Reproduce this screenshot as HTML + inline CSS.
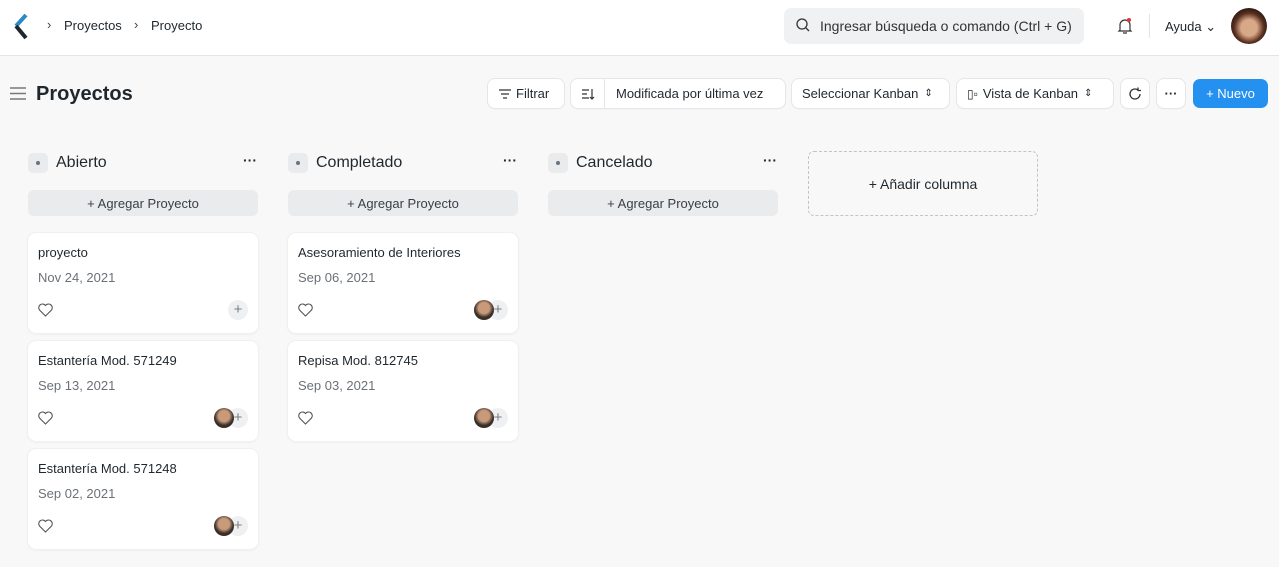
<!DOCTYPE html><html><head><meta charset="utf-8"><style>
*{box-sizing:border-box;margin:0;padding:0}
body{width:1279px;height:567px;overflow:hidden;background:#f8f8f8;font-family:"Liberation Sans",sans-serif;color:#1f272e;position:relative}
.hdr{position:absolute;left:0;top:0;width:1279px;height:56px;background:#fff;border-bottom:1px solid #e2e4e6}
.abs{position:absolute}
.btn{position:absolute;top:79px;height:29px;background:#fff;border-radius:7px;box-shadow:0 0 0 1px #e4e6e8,0 1px 2px rgba(0,0,0,.06);font-size:13px;display:flex;align-items:center;padding:0 10px;color:#1f272e}
.colh{position:absolute;top:154px;font-size:16px;font-weight:500}
.dot{position:absolute;top:153px;width:20px;height:20px;border-radius:5px;background:#e9ebed}
.dot:after{content:"";position:absolute;left:8px;top:8px;width:4px;height:4px;border-radius:2px;background:#6b7280}
.dots{position:absolute;top:152px;font-size:14px;font-weight:bold;letter-spacing:0}
.add{position:absolute;top:190px;width:230px;height:26px;background:#e9ebed;border-radius:6px;font-size:13px;text-align:center;line-height:27px;color:#383f46}
.card{position:absolute;width:230px;height:100px;background:#fff;border-radius:8px;box-shadow:0 0 0 1px #eef0f1,0 1px 3px rgba(0,0,0,.06)}
.card .t{position:absolute;left:10px;top:12px;font-size:13px;font-weight:500}
.card .d{position:absolute;left:10px;top:37px;font-size:13px;color:#6b7177}
.card .h{position:absolute;left:10px;top:70px}
.plus{position:absolute;right:10px;top:67px;width:20px;height:20px;border-radius:10px;background:#eef0f1;color:#7c8187;font-size:15px;text-align:center;line-height:20px}
.av{position:absolute;right:24px;top:67px;width:20px;height:20px;border-radius:10px;background:radial-gradient(circle at 50% 40%,#c89a7a 0 35%,#3a2e28 60%)}
</style></head><body>
<div class="hdr">
<svg class="abs" style="left:14px;top:14px" width="14" height="26" viewBox="0 0 14 26"><path d="M12 1 L2 12" stroke="#2d8ac7" stroke-width="4"/><path d="M2 12 L12 24" stroke="#1f272e" stroke-width="4"/></svg>
<div class="abs" style="left:47px;top:17px;font-size:13px;color:#444">›</div>
<div class="abs" style="left:64px;top:18px;font-size:13px">Proyectos</div>
<div class="abs" style="left:134px;top:17px;font-size:13px;color:#444">›</div>
<div class="abs" style="left:151px;top:18px;font-size:13px">Proyecto</div>
<div class="abs" style="left:784px;top:8px;width:300px;height:36px;background:#f0f1f2;border-radius:7px"></div>
<svg class="abs" style="left:796px;top:18px" width="14" height="14" viewBox="0 0 14 14"><circle cx="6" cy="6" r="5" fill="none" stroke="#333" stroke-width="1.3"/><path d="M10 10l3 3" stroke="#333" stroke-width="1.3"/></svg>
<div class="abs" style="left:820px;top:18px;font-size:14px;color:#333">Ingresar búsqueda o comando (Ctrl + G)</div>
<svg class="abs" style="left:1116px;top:16px" width="18" height="20" viewBox="0 0 18 20"><path d="M4 14V9a5 5 0 0 1 10 0v5l1 1H3z M7 17h4" fill="none" stroke="#333" stroke-width="1.2"/><circle cx="13" cy="4" r="2" fill="#e03636"/></svg>
<div class="abs" style="left:1149px;top:14px;width:1px;height:24px;background:#e2e4e6"></div>
<div class="abs" style="left:1165px;top:19px;font-size:13px">Ayuda ⌄</div>
<div class="abs" style="left:1231px;top:8px;width:36px;height:36px;border-radius:18px;background:radial-gradient(circle at 50% 55%,#d9a888 0 30%,#5a3020 55%,#2a1810 75%)"></div>
</div>
<svg class="abs" style="left:10px;top:87px" width="16" height="13"><path d="M0 1h16M0 6.5h16M0 12h16" stroke="#777" stroke-width="1.5"/></svg>
<div class="abs" style="left:36px;top:83px;font-size:20px;font-weight:bold">Proyectos</div>
<div class="btn" style="left:488px;width:76px"><svg width="14" height="12" style="margin-right:4px"><path d="M1 2h12M3 6h8M5 10h4" stroke="#333" stroke-width="1.3"/></svg>Filtrar</div>
<div class="btn" style="left:571px;width:214px;padding:0"><div style="width:34px;height:29px;border-right:1px solid #e4e6e8;display:flex;align-items:center;justify-content:center"><svg width="14" height="12"><path d="M1 2h7M1 6h5M1 10h7M11 1v10M9 9l2 2 2-2" stroke="#333" stroke-width="1.2" fill="none"/></svg></div><span style="padding-left:11px">Modificada por última vez</span></div>
<div class="btn" style="left:792px;width:157px">Seleccionar Kanban <span style="margin-left:6px;font-size:10px">⇕</span></div>
<div class="btn" style="left:957px;width:156px"><span style="font-size:12px;margin-right:5px">▯▫</span>Vista de Kanban <span style="margin-left:6px;font-size:10px">⇕</span></div>
<div class="btn" style="left:1121px;width:28px;padding:0;justify-content:center"><svg width="14" height="14"><path d="M12 7a5 5 0 1 1-2-4M10 0.5v3h3" fill="none" stroke="#333" stroke-width="1.3"/></svg></div>
<div class="btn" style="left:1157px;width:28px;padding:0;justify-content:center;font-weight:bold">···</div>
<div class="btn" style="left:1193px;width:75px;background:#2490ef;color:#fff;box-shadow:none;justify-content:center">+ Nuevo</div>

<div class="dot" style="left:28px"></div><div class="colh" style="left:56px">Abierto</div><div class="dots" style="left:243px">···</div>
<div class="dot" style="left:288px"></div><div class="colh" style="left:316px">Completado</div><div class="dots" style="left:503px">···</div>
<div class="dot" style="left:548px"></div><div class="colh" style="left:576px">Cancelado</div><div class="dots" style="left:763px">···</div>
<div class="add" style="left:28px">+ Agregar Proyecto</div>
<div class="add" style="left:288px">+ Agregar Proyecto</div>
<div class="add" style="left:548px">+ Agregar Proyecto</div>
<div class="abs" style="left:808px;top:151px;width:230px;height:65px;border:1px dashed #c0c4c8;border-radius:6px;font-size:14px;text-align:center;line-height:65px">+ Añadir columna</div>

<div class="card" style="left:28px;top:233px"><div class="t">proyecto</div><div class="d">Nov 24, 2021</div><svg class="h" width="15" height="14"><path d="M7.5 13 1.5 7A3.3 3.3 0 0 1 7.5 2.5 3.3 3.3 0 0 1 13.5 7z" fill="none" stroke="#555" stroke-width="1.1"/></svg><div class="plus">+</div></div>
<div class="card" style="left:28px;top:341px"><div class="t">Estantería Mod. 571249</div><div class="d">Sep 13, 2021</div><svg class="h" width="15" height="14"><path d="M7.5 13 1.5 7A3.3 3.3 0 0 1 7.5 2.5 3.3 3.3 0 0 1 13.5 7z" fill="none" stroke="#555" stroke-width="1.1"/></svg><div class="plus">+</div><div class="av"></div></div>
<div class="card" style="left:28px;top:449px"><div class="t">Estantería Mod. 571248</div><div class="d">Sep 02, 2021</div><svg class="h" width="15" height="14"><path d="M7.5 13 1.5 7A3.3 3.3 0 0 1 7.5 2.5 3.3 3.3 0 0 1 13.5 7z" fill="none" stroke="#555" stroke-width="1.1"/></svg><div class="plus">+</div><div class="av"></div></div>
<div class="card" style="left:288px;top:233px"><div class="t">Asesoramiento de Interiores</div><div class="d">Sep 06, 2021</div><svg class="h" width="15" height="14"><path d="M7.5 13 1.5 7A3.3 3.3 0 0 1 7.5 2.5 3.3 3.3 0 0 1 13.5 7z" fill="none" stroke="#555" stroke-width="1.1"/></svg><div class="plus">+</div><div class="av"></div></div>
<div class="card" style="left:288px;top:341px"><div class="t">Repisa Mod. 812745</div><div class="d">Sep 03, 2021</div><svg class="h" width="15" height="14"><path d="M7.5 13 1.5 7A3.3 3.3 0 0 1 7.5 2.5 3.3 3.3 0 0 1 13.5 7z" fill="none" stroke="#555" stroke-width="1.1"/></svg><div class="plus">+</div><div class="av"></div></div>
</body></html>
